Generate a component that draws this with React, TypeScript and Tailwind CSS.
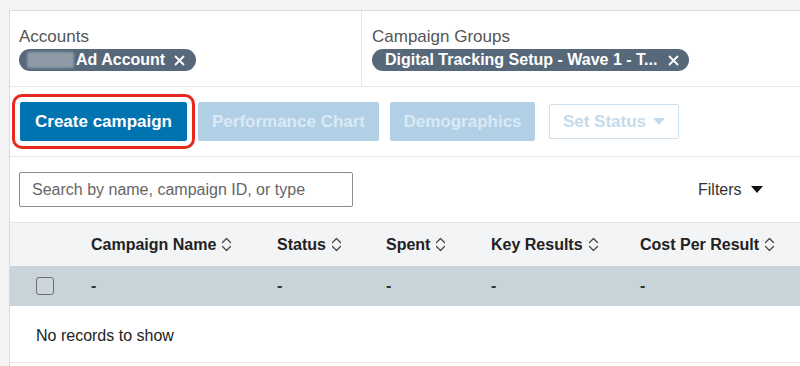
import React from "react";

const Sort = () => (
  <svg width="11" height="17" viewBox="0 0 11 17" className="ml-[5px] inline-block" fill="none" stroke="#444" strokeWidth="1.2" strokeLinecap="round" strokeLinejoin="round">
    <path d="M1.5 6.5 L5.5 2.5 L9.5 6.5" />
    <path d="M1.5 10.5 L5.5 14.5 L9.5 10.5" />
  </svg>
);

const X = ({ color = "#fff" }: { color?: string }) => (
  <svg width="11" height="11" viewBox="0 0 11 11" stroke={color} strokeWidth="1.8" strokeLinecap="round">
    <path d="M1.5 1.5 L9.5 9.5 M9.5 1.5 L1.5 9.5" />
  </svg>
);

const Caret = ({ color }: { color: string }) => (
  <svg width="12" height="7" viewBox="0 0 12 7">
    <path d="M0 0 L12 0 L6 7 Z" fill={color} />
  </svg>
);

export default function App() {
  const font = { fontFamily: '"Liberation Sans", Arial, sans-serif' };
  return (
    <div className="w-[800px] h-[366px] overflow-hidden bg-[#f3f3f3] pt-[10px] pl-[9px]" style={font}>
      <div className="w-[820px] h-[400px] bg-white border-l border-t border-[#dcdcdc]">
        {/* header */}
        <div className="flex h-[76px] border-b border-[#e6e6e6]">
          <div className="w-[352px] border-r border-[#e6e6e6] pl-[9px] pt-[15px]">
            <div className="text-[17px] leading-[21px] text-[#555]">Accounts</div>
            <div className="mt-[2px] inline-flex items-center h-[22px] w-[177px] rounded-full bg-[#56687a] pl-[8px] pr-[10px]">
              <div className="w-[47px] h-[16px] bg-[#8d9aa6] rounded-[2px] blur-[1px]" />
              <span className="ml-[2px] text-white font-bold text-[16px] leading-none">Ad Account</span>
              <span className="ml-[9px] flex items-center"><X /></span>
            </div>
          </div>
          <div className="pl-[10px] pt-[15px]">
            <div className="text-[17px] leading-[21px] text-[#555]">Campaign Groups</div>
            <div className="mt-[2px] inline-flex items-center h-[22px] w-[317px] rounded-full bg-[#56687a] pl-[13px] pr-[10px]">
              <span className="text-white font-bold text-[16px] leading-none whitespace-nowrap">Digital Tracking Setup - Wave 1 - T...</span>
              <span className="ml-auto flex items-center"><X /></span>
            </div>
          </div>
        </div>
        {/* buttons */}
        <div className="flex items-center h-[70px] border-b border-[#e6e6e6] pl-[2px]">
          <div className="p-[5px] border-[3px] border-[#e8281e] rounded-[10px]">
            <button className="w-[167px] h-[39px] bg-[#0073b1] rounded-[2px] text-white font-bold text-[17px]">Create campaign</button>
          </div>
          <button className="ml-[3px] w-[181px] h-[39px] bg-[#b1d0e6] rounded-[2px] text-[#dae9f4] font-bold text-[17px]">Performance Chart</button>
          <button className="ml-[11px] w-[145px] h-[39px] bg-[#b1d0e6] rounded-[2px] text-[#dae9f4] font-bold text-[17px]">Demographics</button>
          <button className="ml-[14px] w-[130px] h-[35px] border border-[#cfe1ef] rounded-[2px] text-[#c5dbec] font-bold text-[17px] flex items-center justify-center gap-[7px]">
            Set Status <Caret color="#c5dbec" />
          </button>
        </div>
        {/* search */}
        <div className="flex items-center h-[65px] pl-[9px]">
          <div className="w-[334px] h-[35px] border border-[#8c8c8c] rounded-[2px] flex items-center pl-[12px] text-[16px] text-[#666]">
            Search by name, campaign ID, or type
          </div>
          <div className="ml-[345px] flex items-center gap-[9px] text-[16px] text-[#333]">
            Filters <Caret color="#111" />
          </div>
        </div>
        {/* table header */}
        <div className="flex items-center h-[44px] bg-[#f3f4f6] border-t border-[#e6e6e6] text-[16px] font-bold text-[#222]">
          <div className="w-[81px]" />
          <div className="w-[186px] flex items-center">Campaign Name<Sort /></div>
          <div className="w-[109px] flex items-center">Status<Sort /></div>
          <div className="w-[105px] flex items-center">Spent<Sort /></div>
          <div className="w-[149px] flex items-center">Key Results<Sort /></div>
          <div className="flex items-center">Cost Per Result<Sort /></div>
        </div>
        {/* row */}
        <div className="flex items-center h-[40px] bg-[#c8d3da] text-[16px] font-bold text-[#333]">
          <div className="w-[81px] pl-[26px]">
            <div className="w-[18px] h-[18px] border border-[#6e6e6e] rounded-[3px] bg-[#cdd6dc]" />
          </div>
          <div className="w-[186px]">-</div>
          <div className="w-[109px]">-</div>
          <div className="w-[105px]">-</div>
          <div className="w-[149px]">-</div>
          <div>-</div>
        </div>
        <div className="h-[57px] flex items-center pl-[26px] pt-[3px] text-[16px] text-[#222] border-b border-[#e6e6e6]">No records to show</div>
      </div>
    </div>
  );
}
